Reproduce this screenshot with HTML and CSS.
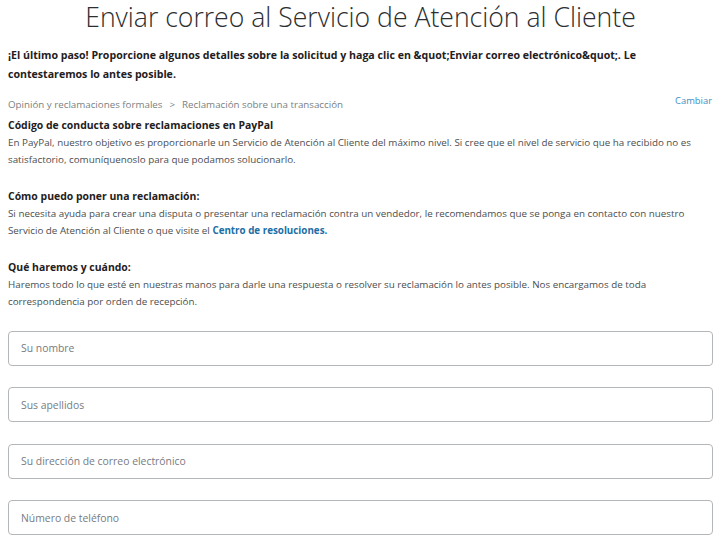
FILE: index.html
```html
<!DOCTYPE html>
<html lang="es">
<head>
<meta charset="utf-8">
<title>Enviar correo al Servicio de Atención al Cliente</title>
<link rel="stylesheet" href="styles.css">
</head>
<body>
<main class="page">
  <h1 class="title">Enviar correo al Servicio de Atención al Cliente</h1>
  <p class="intro">¡El último paso! Proporcione algunos detalles sobre la solicitud y haga clic en &amp;quot;Enviar correo electrónico&amp;quot;. Le<br>contestaremos lo antes posible.</p>

  <div class="crumbs-row">
    <div class="crumbs">Opinión y reclamaciones formales<span class="sep">&gt;</span>Reclamación sobre una transacción</div>
    <a class="change" href="#">Cambiar</a>
  </div>

  <section class="block first">
    <h2 class="block-title">Código de conducta sobre reclamaciones en PayPal</h2>
    <p class="block-text">En PayPal, nuestro objetivo es proporcionarle un Servicio de Atención al Cliente del máximo nivel. Si cree que el nivel de servicio que ha recibido no es<br>satisfactorio, comuníquenoslo para que podamos solucionarlo.</p>
  </section>

  <section class="block">
    <h2 class="block-title">Cómo puedo poner una reclamación:</h2>
    <p class="block-text">Si necesita ayuda para crear una disputa o presentar una reclamación contra un vendedor, le recomendamos que se ponga en contacto con nuestro<br>Servicio de Atención al Cliente o que visite el <a class="link" href="#">Centro de resoluciones.</a></p>
  </section>

  <section class="block">
    <h2 class="block-title">Qué haremos y cuándo:</h2>
    <p class="block-text">Haremos todo lo que esté en nuestras manos para darle una respuesta o resolver su reclamación lo antes posible. Nos encargamos de toda<br>correspondencia por orden de recepción.</p>
  </section>

  <form class="form">
    <input class="field" type="text" placeholder="Su nombre">
    <input class="field" type="text" placeholder="Sus apellidos">
    <input class="field" type="email" placeholder="Su dirección de correo electrónico">
    <input class="field" type="tel" placeholder="Número de teléfono">
  </form>
</main>
</body>
</html>
```
FILE: styles.css
```css
html, body {
  margin: 0;
  padding: 0;
  background: #ffffff;
}

body {
  font-family: "Open Sans", "Noto Sans", "DejaVu Sans", sans-serif;
  color: #2c2e2f;
}

.page {
  padding: 0 7px 0 8px;
}

.title {
  margin: 0;
  font-size: 26.6px;
  line-height: 34px;
  font-weight: 300;
  text-align: center;
  color: #2c2e2f;
}

.intro {
  margin: 12px 0 0;
  font-size: 10.6px;
  line-height: 19px;
  font-weight: 700;
  color: #1f2021;
}

.crumbs-row {
  display: flex;
  justify-content: space-between;
  align-items: flex-start;
  margin-top: 8px;
}

.crumbs {
  margin-top: 4px;
  font-size: 9.75px;
  line-height: 17px;
  color: #7a7f83;
}

.sep {
  margin: 0 7px;
}

.change {
  margin-right: 1px;
  font-size: 9.4px;
  line-height: 17px;
  color: #3c8fc4;
  text-decoration: none;
}

.block {
  margin-top: 20px;
}

.block.first {
  margin-top: 4px;
}

.block-title {
  margin: 0;
  font-size: 10.45px;
  line-height: 17px;
  font-weight: 700;
  color: #1f2021;
}

.block-text {
  margin: 0;
  font-size: 9.8px;
  line-height: 17px;
  color: #4a4d50;
}

.link {
  color: #1c6ea4;
  font-weight: 700;
  text-decoration: none;
}

.form {
  display: flex;
  flex-direction: column;
  gap: 21.5px;
  margin-top: 20.5px;
}

.field {
  display: block;
  width: 100%;
  height: 35px;
  box-sizing: border-box;
  margin: 0;
  padding: 0 12px;
  border: 1px solid #b3b7ba;
  border-radius: 4px;
  background: #ffffff;
  font-family: "Open Sans", "Noto Sans", "DejaVu Sans", sans-serif;
  font-size: 10.4px;
  color: #2c2e2f;
  outline: none;
}

.field::placeholder {
  color: #777b7f;
  opacity: 1;
}
```
